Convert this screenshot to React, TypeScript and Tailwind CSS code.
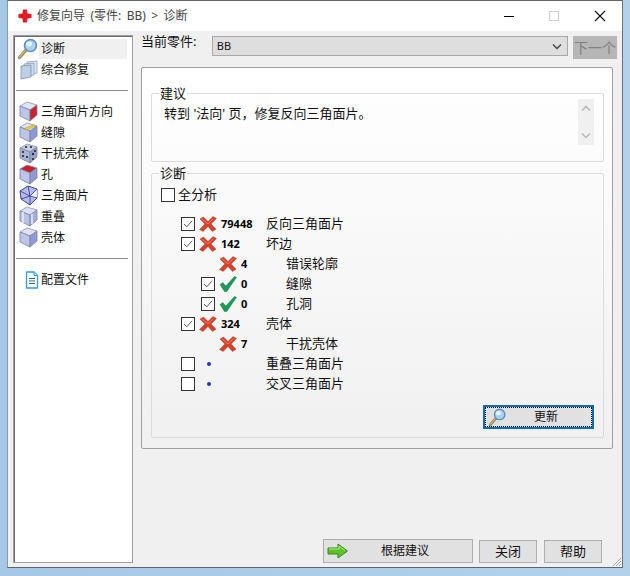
import React from "react";

const Cube = ({ top = "#dfe3f5", left = "#bcc4ea", right = "#9099d8", children }: { top?: string; left?: string; right?: string; children?: React.ReactNode }) => (
  <svg width="20" height="21" viewBox="0 0 20 21" className="shrink-0">
    <polygon points="1,5 8,1 18,4 11,9" fill={top} stroke="#8b93a8" strokeWidth="0.8" strokeLinejoin="round" />
    <polygon points="1,5 11,9 11,20 1,15" fill={left} stroke="#7b84a0" strokeWidth="0.8" strokeLinejoin="round" />
    <polygon points="11,9 18,4 18,14 11,20" fill={right} stroke="#7b84a0" strokeWidth="0.8" strokeLinejoin="round" />
    {children}
  </svg>
);

const Magnifier = ({ size = 22 }: { size?: number }) => (
  <svg width={size} height={size} viewBox="0 0 22 22" className="shrink-0">
    <line x1="2.5" y1="19.5" x2="9" y2="12" stroke="#8c8a66" strokeWidth="3.4" strokeLinecap="round" />
    <line x1="2.5" y1="19" x2="8.5" y2="12" stroke="#d9ae62" strokeWidth="1.4" strokeLinecap="round" />
    <circle cx="13.5" cy="7.5" r="6" fill="#a9d2ee" stroke="#5f90bc" strokeWidth="1.6" />
    <ellipse cx="12" cy="6" rx="3" ry="2.4" fill="#e2f2fb" />
  </svg>
);

const Stack = () => (
  <svg width="20" height="20" viewBox="0 0 20 20" className="shrink-0">
    <polygon points="8,2 18,1 18,13 8,15" fill="#dbe6f3" stroke="#8ea2bc" strokeWidth="0.8" />
    <polygon points="5,4 15,3 15,15 5,17" fill="#cfdcee" stroke="#8ea2bc" strokeWidth="0.8" />
    <polygon points="2,6 12,5 12,17 2,19" fill="#bdd0e8" stroke="#7d92ae" strokeWidth="0.8" />
  </svg>
);

const Doc = () => (
  <svg width="14" height="18" viewBox="0 0 14 18" className="shrink-0">
    <path d="M1.5 1 H9 L12.5 4.5 V17 H1.5 Z" fill="#fff" stroke="#2b9fdc" strokeWidth="1.3" strokeLinejoin="round" />
    <path d="M9 1 V4.5 H12.5" fill="#cfeafa" stroke="#2b9fdc" strokeWidth="1" />
    <path d="M4 7.5 H10 M4 10 H10 M4 12.5 H10" stroke="#31607f" strokeWidth="1" />
  </svg>
);

const sideIcons: Record<string, React.ReactNode> = {
  orient: <Cube right="#c8242b" />,
  gap: (
    <Cube top="#e2e5f6">
      <polygon points="5,6.5 15,2.6 17,3.8 8,8" fill="#eccb3c" stroke="#a58d2a" strokeWidth="0.4" />
    </Cube>
  ),
  dice: (
    <Cube top="#c6cbe0" left="#aab4d6" right="#98a3c8">
      <circle cx="4" cy="9" r="1.1" fill="#22283a" />
      <circle cx="8" cy="14" r="1.1" fill="#22283a" />
      <circle cx="4" cy="13" r="1.1" fill="#22283a" />
      <circle cx="14" cy="11" r="1.2" fill="#22283a" />
      <circle cx="16" cy="8" r="1.1" fill="#22283a" />
      <circle cx="14" cy="16" r="1.1" fill="#22283a" />
      <circle cx="7" cy="4" r="1.1" fill="#22283a" />
      <circle cx="12" cy="4" r="1.1" fill="#22283a" />
    </Cube>
  ),
  hole: <Cube top="#c8202e" />,
  tri: (
    <svg width="20" height="21" viewBox="0 0 20 21" className="shrink-0">
      <polygon points="1,6 9,1 18,4 18,13 11,20 2,14" fill="#b4baee" stroke="#3f4590" strokeWidth="1" strokeLinejoin="round" />
      <polygon points="11,11 18,4 18,13" fill="#fff" fillOpacity="0.8" />
      <path d="M1 6 L11 11 L18 4 M11 11 L11 20 M11 11 L9 1 M2 14 L11 11 M18 13 L11 11" fill="none" stroke="#3f4590" strokeWidth="0.9" />
    </svg>
  ),
  overlap: (
    <Cube top="#dbe0f2" left="#b9c2e6" right="#a5afdc">
      <path d="M4 6 V17 M13 8 V18" stroke="#eef1fb" strokeWidth="1.4" />
    </Cube>
  ),
  shell: <Cube />,
};

const SideItem = ({ icon, label, selected }: { icon: React.ReactNode; label: string; selected?: boolean }) => (
  <div className="flex h-[21px] items-center pl-[2px]">
    <div className="flex w-[22px] shrink-0 items-center justify-end">{icon}</div>
    <div className={`flex h-5 w-[88px] items-center pl-[2px] text-[12px] ${selected ? "bg-[#f0f0f0]" : ""}`}>{label}</div>
  </div>
);

const Check = ({ checked }: { checked: boolean }) => (
  <div className="flex h-[14px] w-[14px] shrink-0 items-center justify-center border border-[#333] bg-white">
    {checked && (
      <svg width="12" height="12" viewBox="0 0 12 12">
        <path d="M2 6 L4.8 8.8 L10 2.8" fill="none" stroke="#555" strokeWidth="1" />
      </svg>
    )}
  </div>
);

const RedX = () => (
  <svg width="18" height="16" viewBox="0 0 18 16" className="shrink-0">
    <path d="M1 3 L4.5 1 L9 5.5 L14 0.6 L17.4 2.5 L12 8 L17 13.2 L13.5 15.4 L9 10.5 L4 15.4 L0.6 13.5 L6 8 Z" fill="#d8402a" stroke="#a84a3c" strokeWidth="0.6" strokeLinejoin="round" />
    <path d="M3 3 L9 8 L14.5 2.5" fill="none" stroke="#ee7a58" strokeWidth="1" />
  </svg>
);

const GreenCheck = () => (
  <svg width="18" height="16" viewBox="0 0 18 16" className="shrink-0">
    <path d="M1 8.5 L3.8 6.5 L6.8 10 L15.5 0.5 L17.5 1.3 L7.8 15.5 L5.5 15.5 Z" fill="#1f9a55" stroke="#17804a" strokeWidth="0.5" strokeLinejoin="round" />
  </svg>
);

type RowT = { check?: boolean; icon: "x" | "ok" | "dot"; num?: string; label: string; child?: boolean };

const rows: RowT[] = [
  { check: true, icon: "x", num: "79448", label: "反向三角面片" },
  { check: true, icon: "x", num: "142", label: "坏边" },
  { icon: "x", num: "4", label: "错误轮廓", child: true },
  { check: true, icon: "ok", num: "0", label: "缝隙", child: true },
  { check: true, icon: "ok", num: "0", label: "孔洞", child: true },
  { check: true, icon: "x", num: "324", label: "壳体" },
  { icon: "x", num: "7", label: "干扰壳体", child: true },
  { check: false, icon: "dot", label: "重叠三角面片" },
  { check: false, icon: "dot", label: "交叉三角面片" },
];

const DiagRow = ({ r }: { r: RowT }) => (
  <div className="flex h-5 items-center">
    <div className={`flex w-[114px] shrink-0 items-center ${r.child ? "pl-[49px]" : "pl-[29px]"}`}>
      <div className="w-[18px] shrink-0">{r.check !== undefined && <Check checked={r.check} />}</div>
      <div className="flex w-[22px] shrink-0 justify-start">
        {r.icon === "x" && <RedX />}
        {r.icon === "ok" && <GreenCheck />}
        {r.icon === "dot" && <div className="ml-[8px] h-1 w-1 rounded-full bg-[#1f35c8]" />}
      </div>
      <span className="text-[11px] font-bold text-black">{r.num}</span>
    </div>
    <span className={`text-[13px] ${r.child ? "pl-5" : ""}`}>{r.label}</span>
  </div>
);

const Chevron = ({ up, color = "#b4b4b4" }: { up?: boolean; color?: string }) => (
  <svg width="10" height="7" viewBox="0 0 10 7">
    <path d={up ? "M1 5.5 L5 1.5 L9 5.5" : "M1 1.5 L5 5.5 L9 1.5"} fill="none" stroke={color} strokeWidth="1.4" />
  </svg>
);

const Separator = () => <div className="my-[10px] ml-px h-px w-[112px] bg-[#8f8f8f]" />;

const GroupBox = ({ title, className, children }: { title: string; className: string; children: React.ReactNode }) => (
  <fieldset className={`rounded-[2px] border border-[#dcdcdc] ${className}`}>
    <legend className="ml-[7px] px-px text-[13px] leading-[14px]">{title}</legend>
    {children}
  </fieldset>
);

const Button = ({ className, children }: { className: string; children: React.ReactNode }) => (
  <div className={`flex items-center border border-[#adadad] bg-[#e1e1e1] ${className}`}>{children}</div>
);

export default function App() {
  return (
    <div className="flex h-[576px] w-[630px] bg-gradient-to-r from-[#a5c8e6] to-[#b3d2ea] px-[7px] pb-[8px] font-['Noto_Sans','Noto_Sans_CJK_SC',sans-serif] text-[#111]">
      <div className="flex w-[616px] flex-col border border-t-[#666] border-r-[#66727c] border-b-[#596670] border-l-[#8d9aa5] bg-[#f0f0f0]">
        <div className="flex h-[30px] shrink-0 items-center bg-white pl-[10px]">
          <svg width="14" height="14" viewBox="0 0 14 14" className="shrink-0">
            <path d="M5 0.5 H9 L9.5 4.5 L13.5 5 V9 L9.5 9.5 L9 13.5 H5 L4.5 9.5 L0.5 9 V5 L4.5 4.5 Z" fill="#e01b24" strokeLinejoin="round" />
          </svg>
          <span className="ml-[5px] text-[12px] text-[#444] [word-spacing:2.3px]">修复向导 (零件: BB) &gt; 诊断</span>
          <div className="ml-auto flex items-center">
            <div className="h-px w-[10px] bg-black" />
            <div className="ml-[35px] h-[10px] w-[10px] border border-[#cfcfcf]" />
            <svg width="12" height="12" viewBox="0 0 12 12" className="ml-[35px] mr-[16px]">
              <path d="M1 1 L11 11 M11 1 L1 11" stroke="#111" strokeWidth="1.1" />
            </svg>
          </div>
        </div>

        <div className="relative flex min-h-0 flex-1 pt-[4px] pb-[4px] pl-[5px]">
          <div className="w-[120px] shrink-0 border border-[#9c9c9c]">
            <div className="h-full border-t border-l border-[#6e6e6e] border-b-0 bg-white pt-px">
              <SideItem icon={<Magnifier />} label="诊断" selected />
              <SideItem icon={<Stack />} label="综合修复" />
              <Separator />
              <SideItem icon={sideIcons.orient} label="三角面片方向" />
              <SideItem icon={sideIcons.gap} label="缝隙" />
              <SideItem icon={sideIcons.dice} label="干扰壳体" />
              <SideItem icon={sideIcons.hole} label="孔" />
              <SideItem icon={sideIcons.tri} label="三角面片" />
              <SideItem icon={sideIcons.overlap} label="重叠" />
              <SideItem icon={sideIcons.shell} label="壳体" />
              <Separator />
              <SideItem icon={<Doc />} label="配置文件" />
            </div>
          </div>

          <div className="ml-[8px] flex w-[476px] flex-col">
            <div className="mt-px flex h-[23px] items-start">
              <span className="-mt-px w-[71px] text-[13px] leading-[13px]">当前零件:</span>
              <div className="flex h-5 w-[357px] items-center border border-[#a8a8a8] bg-[#dedede] pl-[4px] pr-[5px] text-[11px]">
                BB
                <div className="ml-auto"><Chevron color="#444" /></div>
              </div>
              <div className="ml-[5px] flex h-[23px] w-[44px] items-center justify-center bg-[#b6b6b6] text-[14px] leading-none text-[#808080]">下一个</div>
            </div>

            <div className="mt-[8px] flex h-[382px] w-[472px] flex-col rounded-[2px] border border-[#a0a0a0] bg-gradient-to-b from-white to-[#f0f0f0] px-[9px] pt-[18px]">
              <GroupBox title="建议" className="h-[76px] w-[453px] shrink-0">
                <div className="flex">
                  <div className="flex-1 pl-[12px] pt-[5px] text-[13px] leading-[16px]">转到 '法向' 页，修复反向三角面片。</div>
                  <div className="mr-[9px] mt-[-1px] flex h-[46px] w-[16px] flex-col items-center justify-between bg-[#f0f0f0] py-[6px]">
                    <Chevron up />
                    <Chevron />
                  </div>
                </div>
              </GroupBox>

              <GroupBox title="诊断" className="mt-[4px] h-[272px] w-[453px] shrink-0">
                <div className="mt-[5px] flex h-5 items-center pl-[9px]">
                  <Check checked={false} />
                  <span className="ml-[3px] text-[13px]">全分析</span>
                </div>
                <div className="mt-[9px]">
                  {rows.map((r) => (
                    <DiagRow key={r.label} r={r} />
                  ))}
                </div>
                <div className="mt-[11px] flex justify-end pr-[9px]">
                  <div className="flex h-[24px] w-[111px] items-center border-2 border-[#0d6cb5] bg-[#e1e1e1] outline-1 -outline-offset-3 outline-dotted outline-black">
                    <div className="ml-[3px]"><Magnifier size={19} /></div>
                    <span className="ml-[27px] text-[12px]">更新</span>
                  </div>
                </div>
              </GroupBox>
            </div>

            <div className="mt-auto flex items-end pl-[182px]">
              <Button className="h-[24px] w-[150px]">
                <svg width="22" height="16" viewBox="0 0 22 16" className="ml-[3px] shrink-0">
                  <path d="M1 5 H11 V1 L20.5 8 L11 15 V11 H1 Z" fill="#5fc02c" stroke="#2f8a1a" strokeWidth="1" strokeLinejoin="round" />
                  <path d="M2 6 H12 V3 L18 7.5" fill="none" stroke="#b2ec7c" strokeWidth="1" />
                </svg>
                <span className="ml-[32px] text-[12px]">根据建议</span>
              </Button>
              <Button className="ml-[6px] h-[23px] w-[58px] justify-center text-[13px]">关闭</Button>
              <Button className="ml-[7px] h-[23px] w-[58px] justify-center text-[13px]">帮助</Button>
            </div>
          </div>

          <svg width="12" height="12" viewBox="0 0 12 12" className="absolute right-0 bottom-0">
            <path d="M11 3 L3 11 M11 6 L6 11 M11 9 L9 11" stroke="#a8a8a8" strokeWidth="1" />
          </svg>
        </div>
      </div>
    </div>
  );
}
